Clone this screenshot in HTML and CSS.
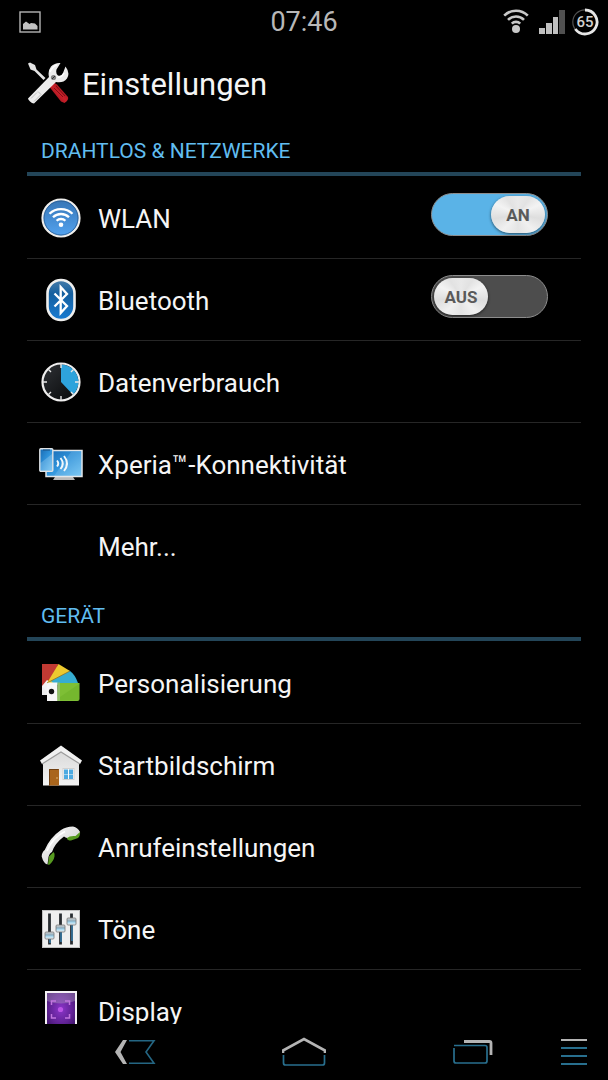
FILE: index.html
```html
<!DOCTYPE html>
<html lang="de">
<head>
    <meta charset="UTF-8">
    <title>Einstellungen</title>
    <meta name="viewport" content="width=device-width, initial-scale=1">
    <link rel="stylesheet" href="styles.css">
</head>
<body>
<!-- Statusleiste -->
<div class="status-bar">
    <svg class="status-picture" width="22" height="22" viewBox="0 0 22 22">
        <rect x="1" y="1" width="20" height="20" fill="none" stroke="#b4b4b4" stroke-width="1.4"/>
        <path d="M4 18.500V13l3-2.500 3.500 2.500 1.500-1 4 .500 2.500 2.500v3.500z" fill="#c2c2c2"/>
    </svg>
    <span class="clock">07:46</span>
    <div class="status-icons">
        <svg width="26" height="26" viewBox="0 0 26 26" fill="none" stroke="#c8c8c8" stroke-width="2.600">
            <path d="M1.200 6.600a16.600 16.600 0 0 1 23.600 0"/>
            <path d="M5 10.800a11.300 11.300 0 0 1 16 0"/>
            <path d="M8.800 14.600a6 6 0 0 1 8.400 0"/>
            <circle cx="13" cy="20" r="4" fill="#c8c8c8" stroke="none"/>
        </svg>
        <svg width="26" height="24" viewBox="0 0 26 24" fill="#c0c0c0">
            <rect x="0" y="18" width="6" height="6"/>
            <rect x="7" y="13" width="6" height="11"/>
            <rect x="14" y="7" width="5" height="17"/>
            <rect x="20" y="0" width="6" height="24" fill="#505050"/>
        </svg>
        <div class="battery">
            <svg width="28" height="28" viewBox="0 0 28 28" fill="none">
                <circle cx="14" cy="14" r="12.200" stroke="#505050" stroke-width="1.200"/>
                <path d="M14 2a12 12 0 1 1-9.700 19" stroke="#e6e6e6" stroke-width="2.800"/>
            </svg>
            <span class="battery-level">65</span>
        </div>
    </div>
</div>

<!-- Titel -->
<div class="header">
    <svg width="42" height="42" viewBox="0 0 42 42">
        <defs>
            <linearGradient id="redHandle" x1="0" y1="1" x2="1" y2="0">
                <stop offset="0" stop-color="#7d0a12"/>
                <stop offset=".5" stop-color="#c9202a"/>
                <stop offset="1" stop-color="#7a0d14"/>
            </linearGradient>
        </defs>
        <path d="M1 1.500L3 .500 8 3l1.500 4.500L18.500 16l-2 2L7.500 9 3.500 7.500z" fill="#e3e3e3"/>
        <path d="M22.500 25l4.500-4.500 3 2 11 12.500q1 3-3.500 6l-3.500-1.500z" fill="url(#redHandle)"/>
        <path d="M27 26l9 9M29 24l9 10" stroke="#6c0a10" stroke-width=".8"/>
        <path d="M1 36.500L22 15q-1.500-6 2-10.500Q28 .500 33.500 1l-4 6.500q-1 4.500 1.500 6 3.500 1 5-2.500l2.500-6.500q5 6.500 1.500 12-4 5-11 3.500L7 41.500q-2 0-4-2t-2-3z" fill="#ececec"/>
        <path d="M23 10q3-6 7-7M30.500 15q4 1 6.500-4" fill="none" stroke="#fff" stroke-width="1.500"/>
        <path d="M11 29.500l3 3-7 7M10 30.500l-6 6" fill="none" stroke="#bdbdbd"/>
        <circle cx="26.500" cy="15.500" r="2.600" fill="#858585"/>
        <path d="M25 17l3-3" stroke="#333"/>
    </svg>
    <h1>Einstellungen</h1>
</div>

<main class="settings">
    <h2>DRAHTLOS &amp; NETZWERKE</h2>
    <ul class="setting-list">
        <li class="setting">
            <svg class="icon" viewBox="0 0 44 44">
                <defs>
                    <linearGradient id="wlanBlue" x1="0" y1="0" x2="0" y2="1">
                        <stop offset="0" stop-color="#3675b5"/>
                        <stop offset="1" stop-color="#53a3f0"/>
                    </linearGradient>
                </defs>
                <circle cx="22" cy="22" r="18.500" fill="url(#wlanBlue)" stroke="#efeeec" stroke-width="2.200"/>
                <circle cx="22" cy="22" r="17" fill="none" stroke="#285a91" stroke-width=".8"/>
                <g fill="none" stroke="#fff" stroke-width="2.300">
                    <path d="M10.500 17.800a16.300 16.300 0 0 1 23 0"/>
                    <path d="M14 21.300a11.300 11.300 0 0 1 16 0"/>
                    <path d="M17.600 24.800a6.300 6.300 0 0 1 8.800 0"/>
                </g>
                <circle cx="22" cy="28.800" r="2.300" fill="#fff"/>
            </svg>
            <label class="setting-name" for="wlan">WLAN</label>
            <span class="switch">
                <input type="checkbox" id="wlan" checked>
                <span class="knob">AN</span>
            </span>
        </li>
        <li class="setting">
            <svg class="icon" viewBox="0 0 44 44">
                <defs>
                    <linearGradient id="btBlue" x1="0" y1="0" x2="0" y2="1">
                        <stop offset="0" stop-color="#477ca9"/>
                        <stop offset=".35" stop-color="#145f9f"/>
                        <stop offset="1" stop-color="#187bd2"/>
                    </linearGradient>
                </defs>
                <rect x="8.500" y="2" width="27" height="40" rx="13.500" fill="url(#btBlue)" stroke="#efefee" stroke-width="2.600"/>
                <path d="M15.500 15.500L28 28l-6.300 7V9l6.300 7-12.500 12.500" fill="none" stroke="#fff" stroke-width="2.300"/>
            </svg>
            <label class="setting-name" for="bluetooth">Bluetooth</label>
            <span class="switch">
                <input type="checkbox" id="bluetooth">
                <span class="knob">AUS</span>
            </span>
        </li>
        <li>
            <a class="setting" href="#datenverbrauch">
                <svg class="icon" viewBox="0 0 44 44">
                    <defs>
                        <linearGradient id="dial" x1="0" y1="0" x2="1" y2="1">
                            <stop offset="0" stop-color="#2f3236"/>
                            <stop offset="1" stop-color="#050607"/>
                        </linearGradient>
                    </defs>
                    <circle cx="22" cy="22" r="18.500" fill="url(#dial)" stroke="#efeeee" stroke-width="2.200"/>
                    <path d="M22 22V4.500A17.500 17.500 0 0 1 34 34.700z" fill="#2ea3dc"/>
                    <path d="M22 4v4M22 36v4M4 22h4M36 22h4M9.500 9.500l2.500 2.500M34.500 9.500L32 12M9.500 34.500L12 32M34.500 34.500L32 32" stroke="#e6e6e6" stroke-width="1.400"/>
                </svg>
                <span class="setting-name">Datenverbrauch</span>
            </a>
        </li>
        <li>
            <a class="setting" href="#konnektivitaet">
                <svg class="icon" viewBox="0 0 44 44">
                    <defs>
                        <linearGradient id="screen" x1="0" y1="0" x2="1" y2="1">
                            <stop offset="0" stop-color="#1769b2"/>
                            <stop offset=".5" stop-color="#3195dc"/>
                            <stop offset="1" stop-color="#6bc1f2"/>
                        </linearGradient>
                    </defs>
                    <path d="M16 35h18l2 3H14z" fill="#b9b9b9"/>
                    <rect x="7" y="8.500" width="36" height="26" fill="url(#screen)" stroke="#e4e7e9" stroke-width="1.500"/>
                    <path d="M32 10h10v24H15z" fill="#fff" opacity=".13"/>
                    <rect x=".8" y="6.800" width="13" height="22.500" rx="1" fill="url(#screen)" stroke="#e0e3e5" stroke-width="1.400"/>
                    <path d="M1.500 21L13 12v16H1.500z" fill="#fff" opacity=".2"/>
                    <path d="M4 8h7" stroke="#1d4f7d"/>
                    <g fill="none" stroke="#f2f8fb" stroke-width="1.900">
                        <path d="M18 18.500q2.500 3 0 6"/>
                        <path d="M21.500 16q4.500 5.500 0 11"/>
                        <path d="M25 14q6 7.500 0 15"/>
                    </g>
                </svg>
                <span class="setting-name">Xperia™-Konnektivität</span>
            </a>
        </li>
        <li>
            <a class="setting" href="#mehr">
                <span class="icon"></span>
                <span class="setting-name">Mehr...</span>
            </a>
        </li>
    </ul>

    <h2>GERÄT</h2>
    <ul class="setting-list">
        <li>
            <a class="setting" href="#personalisierung">
                <svg class="icon" viewBox="0 0 44 44">
                    <path d="M3 3h16l-6 30H3z" fill="#c13a33"/>
                    <path d="M3 25h8v9H3z" fill="#ededed"/>
                    <path d="M3 25l5-6 6 4-5 9z" fill="#f3f3f3"/>
                    <path d="M19.500 3L31 10 16 24l-8-2z" fill="#edc92e"/>
                    <path d="M31 10q5 3.500 8 12L16 24l-4-4z" fill="#36add1"/>
                    <path d="M8 22L31 10" stroke="#87712e" stroke-width=".8"/>
                    <path d="M19 22h21.500v16q0 2-2 2H18z" fill="#7ebf35"/>
                    <path d="M8 23q0-1.500 2-1.500h8.500V40H8z" fill="#f7f7f7"/>
                    <path d="M18.500 21.500H21V40h-2.500z" fill="#8fbf66"/>
                    <path d="M21 36L40 23v16H21z" fill="#6fb329" opacity=".6"/>
                    <circle cx="12.500" cy="30.500" r="2.700" fill="#111"/>
                </svg>
                <span class="setting-name">Personalisierung</span>
            </a>
        </li>
        <li>
            <a class="setting" href="#startbildschirm">
                <svg class="icon" viewBox="0 0 44 44">
                    <defs>
                        <linearGradient id="wall" x1="0" y1="0" x2="0" y2="1">
                            <stop offset="0" stop-color="#d7d7d7"/>
                            <stop offset="1" stop-color="#f4f4f4"/>
                        </linearGradient>
                    </defs>
                    <path d="M4 17L22 5l18 12v25.500H4z" fill="url(#wall)"/>
                    <path d="M1 17.500L22 2.500l21 15-2 3.500L22 9 3 21z" fill="#f1f1f1"/>
                    <path d="M3 21L22 9l19 12" fill="none" stroke="#9c9c9c" stroke-width="1.200"/>
                    <rect x="10" y="26" width="10" height="16.500" fill="#a9651c"/>
                    <path d="M10.500 42.500v-16h9" fill="none" stroke="#704012"/>
                    <circle cx="18" cy="35" r=".8" fill="#e5c27b"/>
                    <rect x="24" y="25.500" width="11" height="11" fill="#fafafa" stroke="#d0d0d0"/>
                    <path d="M25 26.500h4V31h-4zM30 26.500h4V31h-4zM25 31.500h4V36h-4zM30 31.500h4V36h-4z" fill="#4daae1"/>
                </svg>
                <span class="setting-name">Startbildschirm</span>
            </a>
        </li>
        <li>
            <a class="setting" href="#anrufeinstellungen">
                <svg class="icon" viewBox="0 0 44 44">
                    <defs>
                        <linearGradient id="handset" x1="0" y1="0" x2="1" y2="1">
                            <stop offset="0" stop-color="#fff"/>
                            <stop offset="1" stop-color="#c5c5c5"/>
                        </linearGradient>
                    </defs>
                    <path d="M28 10l7 0 6-3.500q.500 4-2 6.500l-7 2.500q-3.500 0-4-2zM9 39.500l1-8 4.500-4.500q1.500 1 1 4.500-1 5-5.500 8.500z" fill="#569a20"/>
                    <path d="M2.700 31.500q0-4 3-6.500Q11 12.500 22 5q5-3.500 12-3.500 5 1 7 5.500l-4.500 4q-6-.500-8.500 2-1.500-.500-3-1.500Q16 18 13 27q-2.500 1-3.500 5L8.500 39.500Q4.500 38.500 2.700 31.500z" fill="url(#handset)"/>
                    <path d="M8 26Q13 13 26 6.500" fill="none" stroke="#fff" stroke-width="1.500"/>
                </svg>
                <span class="setting-name">Anrufeinstellungen</span>
            </a>
        </li>
        <li>
            <a class="setting" href="#toene">
                <svg class="icon" viewBox="0 0 44 44">
                    <defs>
                        <linearGradient id="slider" x1="0" y1="0" x2="0" y2="1">
                            <stop offset="0" stop-color="#d9d9d9"/>
                            <stop offset=".45" stop-color="#87a6b8"/>
                            <stop offset=".55" stop-color="#9bd3ee"/>
                            <stop offset="1" stop-color="#eee"/>
                        </linearGradient>
                    </defs>
                    <rect x="3.500" y="3.500" width="37" height="37" fill="#efefef" stroke="#c2c2c2"/>
                    <path d="M10.500 6.500v31M21.500 6.500v31M32.500 6.500v31" stroke="#292d31" stroke-width="2.800"/>
                    <path d="M11 27v9M22 20v15M33 14v20" stroke="#3789bd" stroke-width="1.300"/>
                    <g fill="url(#slider)" stroke="#777" stroke-width=".8">
                        <rect x="6" y="25" width="9" height="7" rx="1"/>
                        <rect x="17" y="18" width="9" height="7" rx="1"/>
                        <rect x="28" y="11" width="9" height="7" rx="1"/>
                    </g>
                </svg>
                <span class="setting-name">Töne</span>
            </a>
        </li>
        <li>
            <a class="setting" href="#display">
                <svg class="icon" viewBox="0 0 44 44">
                    <defs>
                        <radialGradient id="violet" cx=".5" cy=".45" r=".65">
                            <stop offset="0" stop-color="#8b35c9"/>
                            <stop offset=".6" stop-color="#602294"/>
                            <stop offset="1" stop-color="#391163"/>
                        </radialGradient>
                    </defs>
                    <rect x="7" y="3" width="30" height="38" fill="url(#violet)" stroke="#f4f1f5" stroke-width="2"/>
                    <path d="M8 4h28v8q-14 5-28 0z" fill="#b29fc0" opacity=".4"/>
                    <path d="M12.500 16v-4H17M26 12h4.500v4M12.500 25v4H17M26 29h4.500v-4" fill="none" stroke="#c275df" stroke-width="1.500"/>
                    <circle cx="21.500" cy="20.500" r="2.600" fill="#bb54e6"/>
                </svg>
                <span class="setting-name">Display</span>
            </a>
        </li>
    </ul>
</main>

<!-- Navigationsleiste -->
<nav class="nav-bar">
    <button class="nav-button" aria-label="Zurück">
        <svg width="42" height="26" viewBox="0 0 42 26" fill="none">
            <path d="M9 1h4L6.500 13 13 25H9L1 13z" fill="#b4b4b4"/>
            <path d="M15 1.800h25L32 13l8 11.200H15" stroke="#246683" stroke-width="1.600"/>
        </svg>
    </button>
    <button class="nav-button" aria-label="Startseite">
        <svg width="44" height="30" viewBox="0 0 44 30" fill="none">
            <path d="M1 16v-2.500L22 2l21 11.500V16" stroke="#b4b4b4" stroke-width="2.600"/>
            <path d="M1.500 18v8q0 2 2 2h37q2 0 2-2v-8" stroke="#286f8e" stroke-width="1.700"/>
        </svg>
    </button>
    <button class="nav-button" aria-label="Letzte Apps">
        <svg width="40" height="26" viewBox="0 0 40 26" fill="none">
            <path d="M11 2.500h25.500q1.500 0 1.500 1.500v12" stroke="#b4b4b4" stroke-width="2.800"/>
            <path d="M1 6.500h31q2 0 2 2V22q0 2-2 2H3q-2 0-2-2V9" stroke="#286f8e" stroke-width="1.700"/>
        </svg>
    </button>
    <button class="nav-button nav-menu" aria-label="Menü">
        <svg width="26" height="30" viewBox="0 0 26 30" fill="none" stroke="#286f8e" stroke-width="2">
            <path d="M0 3h26" stroke="#b4b4b4"/>
            <path d="M0 11h26M0 19h26M0 27h26"/>
        </svg>
    </button>
</nav>

<script>
// Beschriftung des Schalters anpassen
document.querySelectorAll('.switch input').forEach(input => {
    input.addEventListener('change', () => {
        input.nextElementSibling.textContent = input.checked ? 'AN' : 'AUS';
    });
});
</script>
</body>
</html>
```
FILE: styles.css
```css
* { box-sizing: border-box; }
body { display: flex; flex-direction: column; height: 100vh; margin: 0; background: #000; color: #f5f5f5; font-family: Roboto, sans-serif; }
svg { display: block; flex-shrink: 0; }
h1, h2 { margin: 0; font-weight: 400; }

.status-bar { display: grid; grid-template-columns: 1fr auto 1fr; align-items: center; flex-shrink: 0; height: 44px; padding: 0 9px 0 19px; }
.clock { font-size: 27px; color: #b8b8b8; padding-right: 10px; }
.status-icons { display: flex; justify-content: flex-end; align-items: center; gap: 10px; }
.battery { position: relative; margin-left: -4px; }
.battery-level { position: absolute; inset: 0; display: flex; align-items: center; justify-content: center; font-size: 15px; font-weight: 500; color: #d2d2d2; }

.header { display: flex; align-items: center; gap: 13px; flex-shrink: 0; height: 78px; padding: 0 27px; }
h1 { font-size: 31px; padding-top: 2px; }

.settings { flex: 1; min-height: 0; overflow: hidden; padding: 0 27px; }
h2 { height: 54px; margin-bottom: 1px; padding: 16px 14px 0; border-bottom: 4px solid #234558; font-size: 21px; line-height: 26px; color: #61bdf0; }
.setting-list { list-style: none; margin: 0; padding: 0; }
.setting-list li { height: 82px; border-bottom: 1px solid #262626; }
.setting-list li:last-child { border-bottom: none; }
.setting { display: flex; align-items: center; height: 100%; padding: 0 33px 0 12px; color: inherit; text-decoration: none; }
.icon { width: 44px; height: 44px; margin-right: 15px; }
.setting-name { flex: 1; font-size: 26px; line-height: 32px; padding-top: 2px; }

.switch { position: relative; width: 117px; height: 43px; margin-bottom: 6px; }
.switch input { appearance: none; display: block; width: 100%; height: 100%; margin: 0; border: 1px solid #8d8d8d; border-radius: 22px; background: #4d4d4d; cursor: pointer; }
.switch input:checked { background: #5ab3e7; }
.knob { position: absolute; top: 3px; left: 3px; display: flex; align-items: center; justify-content: center; width: 54px; height: 37px; border-radius: 19px; background: conic-gradient(#e9e9e9, #e2e2e2 35deg, #f3f3f3 65deg, #dedede 100deg, #f0f0f0 135deg, #e4e4e4 180deg, #f0f0f0 225deg, #dedede 260deg, #f3f3f3 295deg, #e2e2e2 325deg, #e9e9e9); box-shadow: 0 1px 3px #0009; color: #5a5a5a; font-size: 17px; font-weight: 700; pointer-events: none; }
.switch input:checked + .knob { left: auto; right: 3px; }

.nav-bar { display: grid; grid-template-columns: repeat(3, 1fr) 51px; flex-shrink: 0; height: 56px; padding-left: 51px; }
.nav-button { display: flex; align-items: center; justify-content: center; padding: 0; border: none; background: none; cursor: pointer; }
.nav-menu { padding-right: 17px; }
```
